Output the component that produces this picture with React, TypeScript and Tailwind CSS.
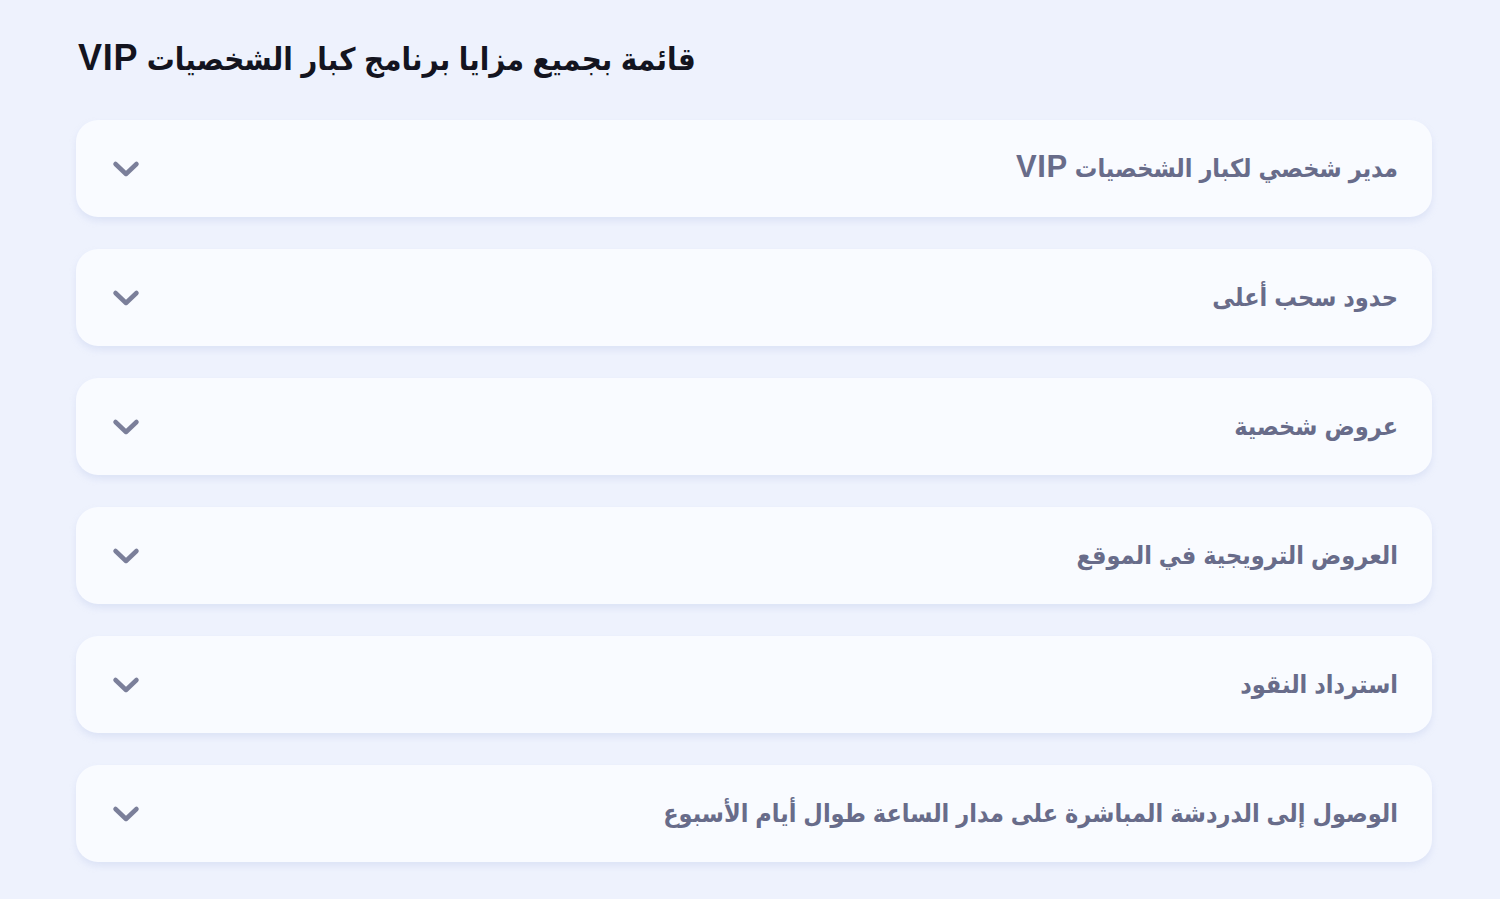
import React, { useState } from "react";

const benefits = [
  "مدير شخصي لكبار الشخصيات VIP",
  "حدود سحب أعلى",
  "عروض شخصية",
  "العروض الترويجية في الموقع",
  "استرداد النقود",
  "الوصول إلى الدردشة المباشرة على مدار الساعة طوال أيام الأسبوع",
];

const Chevron: React.FC<{ open: boolean }> = ({ open }) => (
  <svg
    width="28"
    height="20"
    viewBox="0 0 28 20"
    fill="none"
    className={open ? "rotate-180 transition-transform" : "transition-transform"}
  >
    <path
      d="M3.5 5l10.5 10L24.5 5"
      stroke="#7b7f9a"
      strokeWidth="4.5"
      strokeLinecap="round"
      strokeLinejoin="round"
    />
  </svg>
);

const App: React.FC = () => {
  const [openIndex, setOpenIndex] = useState<number | null>(null);

  return (
    <div
      dir="rtl"
      className="min-h-[899px] w-full bg-[#eef2fd] pt-[38px] pb-[36px]"
      style={{ fontFamily: '"Liberation Sans", "DejaVu Sans Condensed", "DejaVu Sans", sans-serif' }}
    >
      <h2 className="mb-[38px] h-[44px] pl-[78px] text-left text-[31px] font-bold leading-[44px] text-[#13141f]">
        قائمة بجميع مزايا برنامج كبار الشخصيات{" "}
        <span className="text-[36px] leading-none tracking-[0.02em]">VIP</span>
      </h2>
      <div className="flex flex-col gap-[32px] pl-[76px] pr-[68px]">
        {benefits.map((item, i) => (
          <button
            key={item}
            onClick={() => setOpenIndex(openIndex === i ? null : i)}
            className="flex h-[97px] w-full items-center justify-between rounded-[22px] bg-[#f9fbff] pr-[34px] pl-[36px] shadow-[0_4px_6px_rgba(190,200,235,0.35)]"
          >
            <span className="text-[25px] font-bold text-[#686c8a]">
              {item.endsWith(" VIP") ? (
                <>
                  {item.slice(0, -4)}{" "}
                  <span className="text-[31px] leading-none tracking-[0.02em]">VIP</span>
                </>
              ) : (
                item
              )}
            </span>
            <Chevron open={openIndex === i} />
          </button>
        ))}
      </div>
    </div>
  );
};

export default App;
